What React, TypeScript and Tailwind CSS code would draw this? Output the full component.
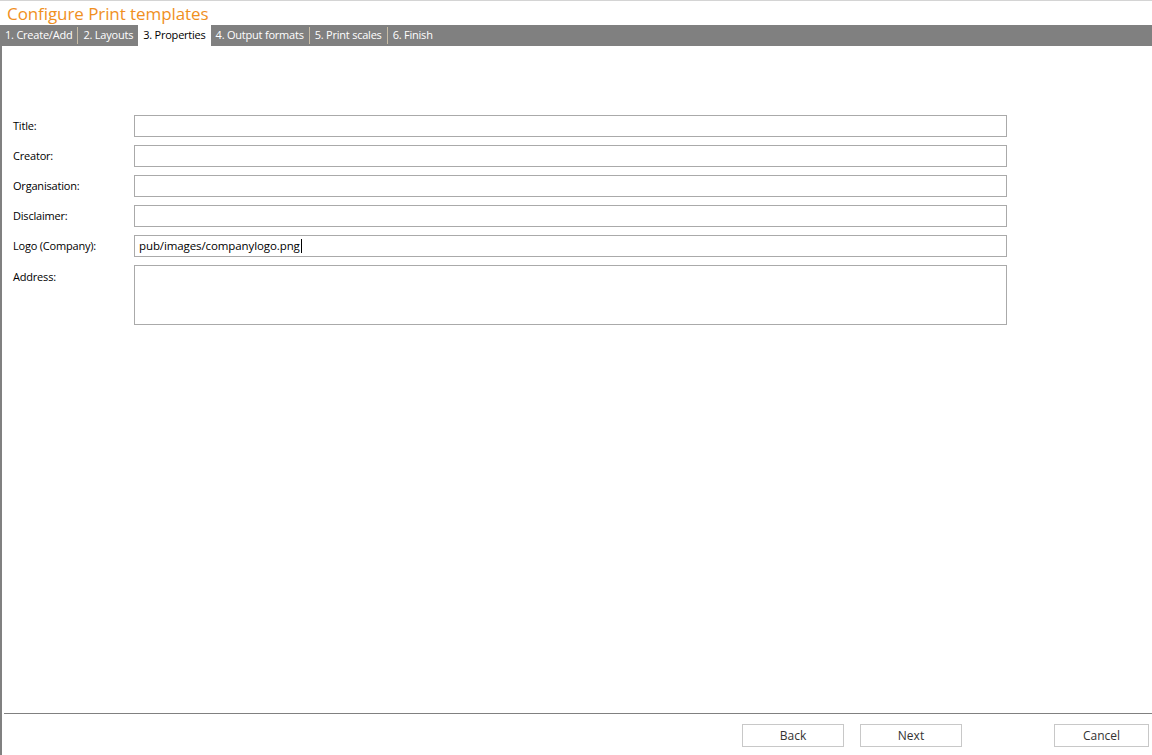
import React from "react";

const tabs = ["1. Create/Add", "2. Layouts", "3. Properties", "4. Output formats", "5. Print scales", "6. Finish"];
const fields = ["Title:", "Creator:", "Organisation:", "Disclaimer:"];

export default function App() {
  const font = { fontFamily: '"Open Sans", "Noto Sans", sans-serif' };
  return (
    <div className="w-[1152px] h-[755px] flex flex-col bg-white overflow-hidden" style={font}>
      <div className="h-px bg-[#d4d4d4] shrink-0" />
      <div className="h-[24px] shrink-0 pl-[7px] flex items-center text-[17px] leading-none text-[#f0901e] tracking-[-0.08px]">
        Configure Print templates
      </div>
      <div className="h-[21px] shrink-0 bg-[#808080] flex items-stretch text-[11px] tracking-[-0.22px]">
        {tabs.map((t, i) => {
          const active = i === 2;
          return (
            <div key={t} className="flex items-stretch">
              {i > 0 && i !== 2 && i !== 3 && <div className="w-px my-[2px] bg-[#c8bca4]" />}
              <div
                className={
                  active
                    ? "bg-white text-black px-[5px] flex items-center -mt-px"
                    : "text-white px-[5px] flex items-center"
                }
              >
                {t}
              </div>
            </div>
          );
        })}
      </div>
      <div className="flex-1 flex flex-col border-l-2 border-[#808080]">
        <div className="flex-1 pt-[69px] pl-[11px] flex flex-col gap-[8px] text-[11px] text-black tracking-[-0.2px]">
          {fields.map((f) => (
            <div key={f} className="flex items-center h-[22px]">
              <div className="w-[121px]">{f}</div>
              <div className="w-[873px] h-[22px] border border-[#aaaaaa]" />
            </div>
          ))}
          <div className="flex items-center h-[22px]">
            <div className="w-[121px]">Logo (Company):</div>
            <div className="w-[873px] h-[22px] border border-[#aaaaaa] flex items-center pl-[4px] text-[11.5px] tracking-[-0.1px]">
              pub/images/companylogo.png
              <span className="inline-block w-px h-[14px] bg-black ml-px" />
            </div>
          </div>
          <div className="flex items-start">
            <div className="w-[121px] pt-[4px]">Address:</div>
            <div className="w-[873px] h-[60px] border border-[#aaaaaa]" />
          </div>
        </div>
        <div className="h-px bg-[#808080] ml-[2px] shrink-0" />
        <div className="h-[41px] shrink-0 flex items-start pt-[10px] text-[12px] text-[#333333]">
          <div className="w-[740px]" />
          <button className="w-[102px] h-[23px] border border-[#c8c8c8] bg-white flex items-center justify-center">Back</button>
          <div className="w-[16px]" />
          <button className="w-[102px] h-[23px] border border-[#c8c8c8] bg-white flex items-center justify-center">Next</button>
          <div className="w-[92px]" />
          <button className="w-[95px] h-[23px] border border-[#c8c8c8] bg-white flex items-center justify-center">Cancel</button>
        </div>
      </div>
    </div>
  );
}
